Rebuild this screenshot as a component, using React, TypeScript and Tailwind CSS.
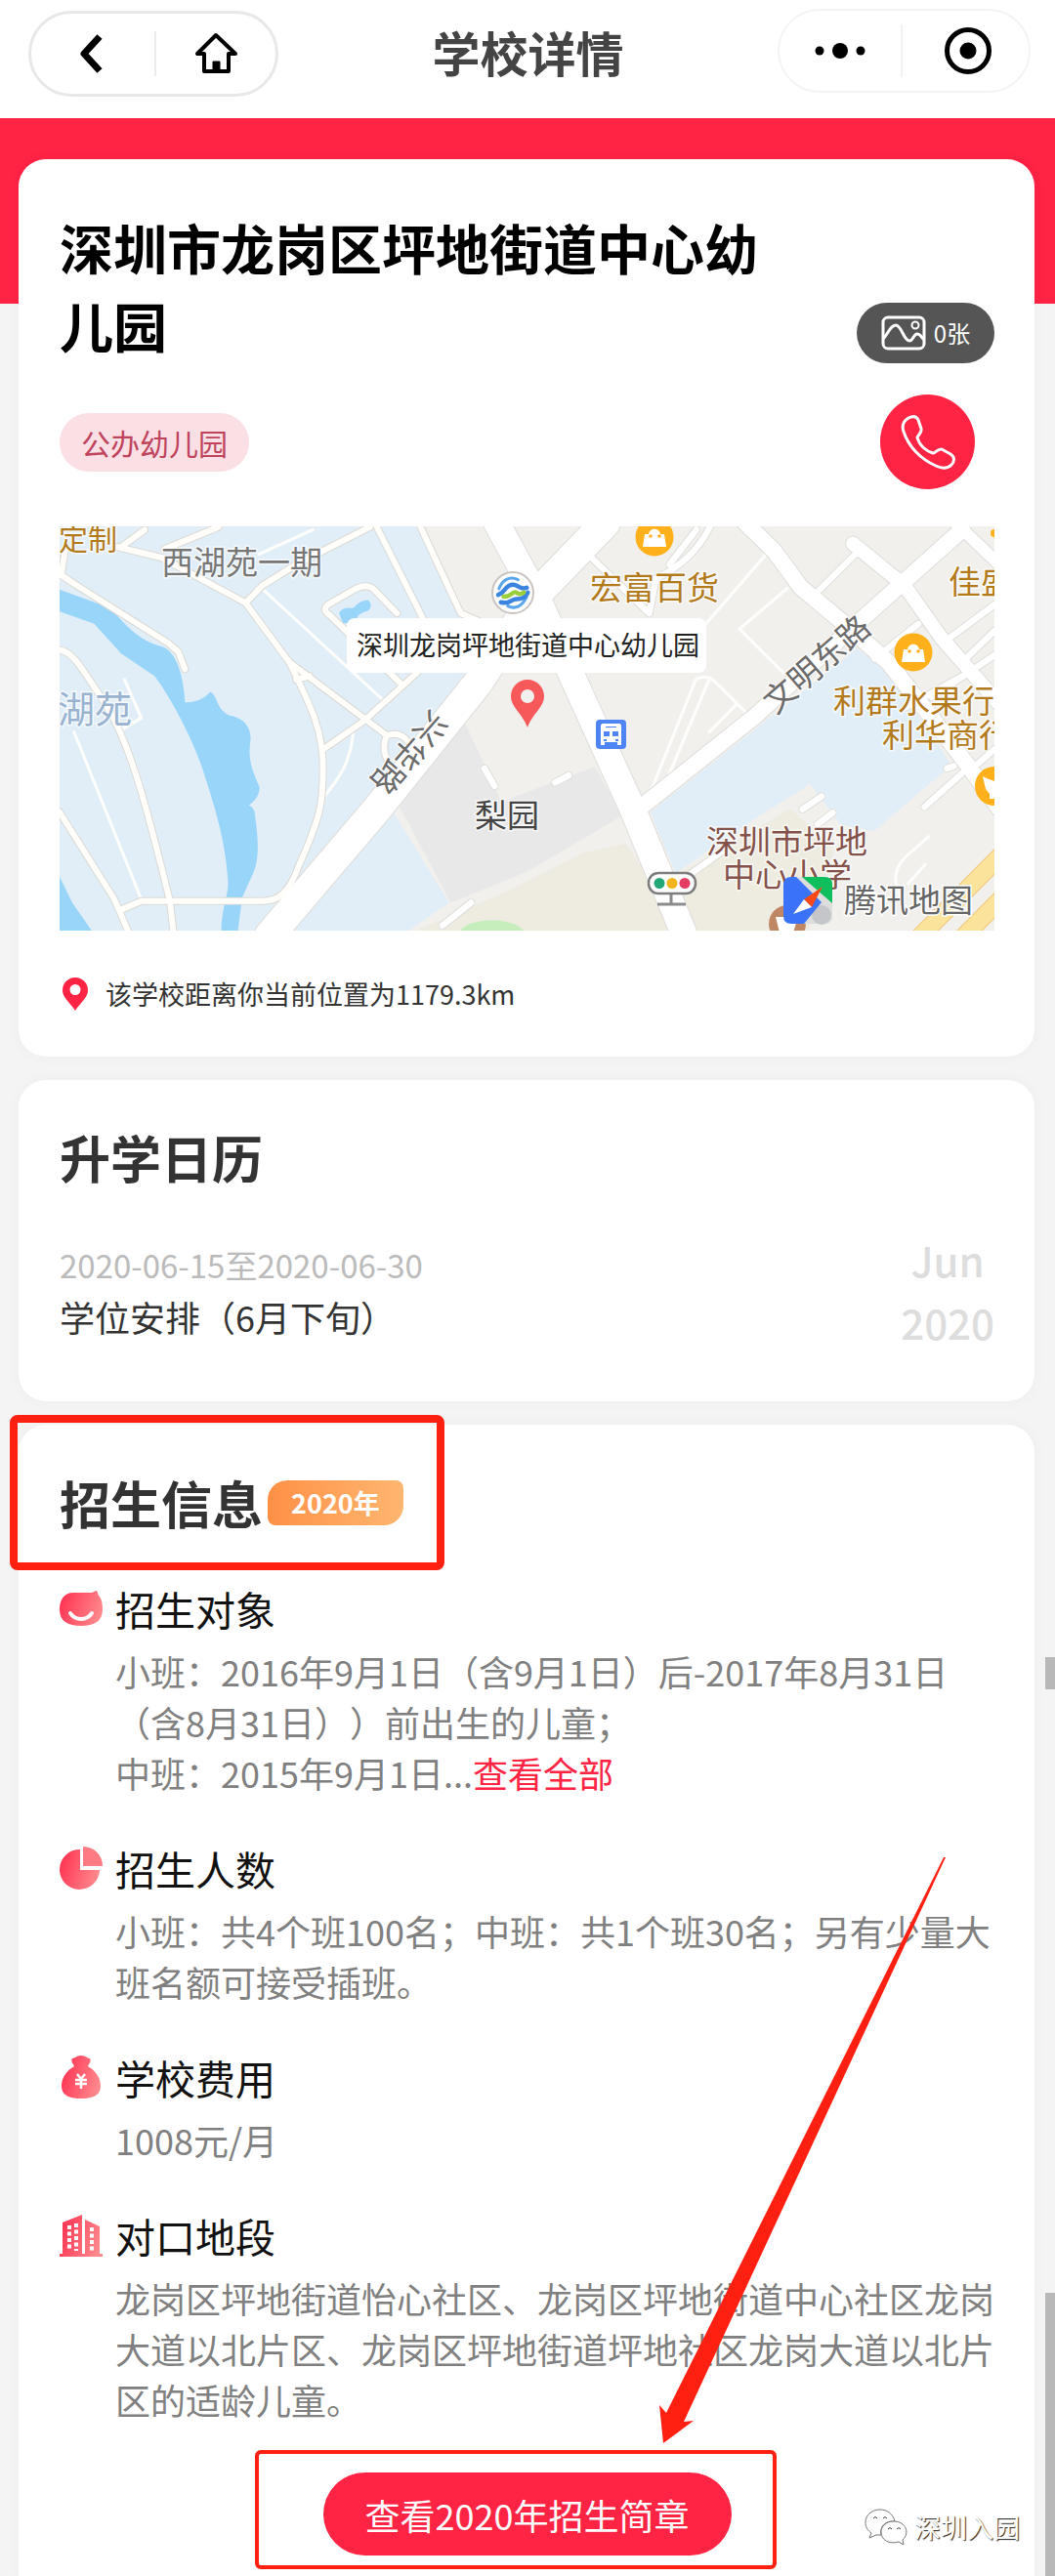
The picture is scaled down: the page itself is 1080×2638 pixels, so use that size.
import type { ReactNode } from "react";

const FONT = "font-['Noto_Sans_CJK_SC','Noto_Sans',sans-serif]";

export default function App() {
  return (
    <div className={`relative min-h-screen overflow-hidden bg-[#f4f4f4] text-[#333] [text-spacing-trim:space-all] ${FONT}`}>
      <NavBar />
      <div className="h-[190px] bg-[#ff2344]" />

      <main className="-mt-[148px] mr-[21px] ml-[19px] flex flex-col gap-6">
        <SchoolCard />
        <CalendarCard />
        <EnrollCard />
      </main>

      {/* Scroll thumbs */}
      <div aria-hidden className="absolute top-[1697px] right-0 h-[33px] w-[10px] bg-[#b8b8b8]" />
      <div aria-hidden className="absolute right-0 bottom-0 h-[290px] w-[10px] bg-[#b8b8b8]" />
    </div>
  );
}

function NavBar() {
  return (
    <header className="flex h-[121px] items-start justify-between bg-white pt-[9px] pr-[25px] pl-[29px]">
      <div className="mt-[2px] flex h-[88px] w-[256px] items-center rounded-full border-[3px] border-[#e8e8e8]">
        <button aria-label="返回" className="flex h-full flex-1 items-center justify-center pr-1">
          <svg width="24" height="40" viewBox="0 0 24 40" fill="none" stroke="#000" strokeWidth="7">
            <path d="M21 2.500L5 20l16 17.500" strokeLinejoin="round" />
          </svg>
        </button>
        <span className="h-[46px] w-[2px] bg-[#ececec]" />
        <button aria-label="首页" className="flex h-full flex-1 items-center justify-center">
          <svg width="44" height="44" viewBox="0 0 44 44" fill="none" stroke="#000" strokeWidth="4" strokeLinejoin="round">
            <path d="M22 3L3 22h7v18h25V22h7z" />
            <path d="M19 30h7v10h-7z" fill="#000" strokeWidth="1" />
          </svg>
        </button>
      </div>

      <h1 className="mt-[9px] text-[49px] leading-[70px] font-bold text-[#444]">学校详情</h1>

      <div className="flex h-[86px] w-[259px] items-center rounded-full border-2 border-[#f4f4f4]">
        <button aria-label="更多" className="flex h-full flex-1 items-center justify-center">
          <svg width="52" height="20" viewBox="0 0 52 20">
            <circle cx="5" cy="10" r="4.500" />
            <circle cx="26" cy="10" r="8" />
            <circle cx="47" cy="10" r="4.500" />
          </svg>
        </button>
        <span className="h-[54px] w-[2px] bg-[#f2f2f2]" />
        <button aria-label="关闭" className="flex h-full flex-1 items-center justify-center pl-1">
          <svg width="50" height="50" viewBox="0 0 50 50">
            <circle cx="25" cy="25" r="21.500" fill="none" stroke="#000" strokeWidth="5" />
            <circle cx="25" cy="25" r="8.500" />
          </svg>
        </button>
      </div>
    </header>
  );
}

function SchoolCard() {
  return (
    <section className="rounded-[28px] bg-white pt-[49px] pr-[41px] pb-[44px] pl-[42px] shadow-[0_0_16px_rgba(0,0,0,0.03)]">
      <div className="flex items-end gap-16">
        <h2 className="flex-1 text-[55px] leading-[80px] font-bold text-black">深圳市龙岗区坪地街道中心幼儿园</h2>
        <button className="flex h-[62px] w-[141px] items-center justify-center gap-2 rounded-full bg-[#555] text-[24px] text-white">
          <svg width="46" height="36" viewBox="0 0 46 36" fill="none" stroke="#fff" strokeWidth="3">
            <rect x="2" y="2" width="42" height="32" rx="5" />
            <path d="M3 23C8 17 10 10 15 10c6 0 8 16 14 16 4 0 4-7 8-7 3 0 4 3 6 5" strokeLinecap="round" />
            <circle cx="35" cy="10" r="3.500" strokeWidth="2" />
          </svg>
          0张
        </button>
      </div>

      <div className="mt-[32px] flex items-center justify-between pr-5">
        <span className="rounded-full bg-[#fae0e5] px-[22px] text-[30px] leading-[60px] text-[#c0435c]">公办幼儿园</span>
        <button aria-label="拨打电话" className="flex h-[97px] w-[97px] items-center justify-center rounded-full bg-[#ff2344]">
          <svg width="56" height="56" viewBox="0 0 56 56" fill="none" stroke="#fff" strokeWidth="3" strokeLinejoin="round">
            <path d="M8 3c4-2 8-2 10 2l3 9c1 4-3 6-4 9 2 8 9 14 16 16 3 0 5-5 9-4l9 5c5 3 4 8 1 11-4 4-10 4-16 1C20 45 8 32 3 17 1 11 3 6 8 3z" />
          </svg>
        </button>
      </div>

      <SchoolMap />

      <p className="mt-[45px] flex items-center text-[27px] leading-[40px]">
        <svg className="mr-[18px] ml-[3px]" width="26" height="34" viewBox="0 0 26 34">
          <path d="M13 0a13 13 0 0 0-13 13c0 8 8 13 13 21 5-8 13-13 13-21A13 13 0 0 0 13 0zm0 7a5.500 5.500 0 1 1 0 11 5.500 5.500 0 0 1 0-11z" fill="#ff2344" />
        </svg>
        该学校距离你当前位置为1179.3km
      </p>
    </section>
  );
}

const lanes = [
  "M195 110L182 190L220 215L500 385L530 410L550 460",
  "M350 110L480 140L730 270L860 440C920 560 960 630 960 740C960 830 960 870 890 1020C860 1100 830 1125 780 1125L420 1125L360 1150",
  "M730 270L780 220L880 160L1100 52",
  "M860 440L1150 650M880 490L920 480M1150 650C1130 690 1150 740 1190 760M1150 650C1180 640 1200 650 1215 670",
  "M360 110L430 60M490 115L650 52",
  "M177 405C220 410 250 470 300 540C380 650 430 830 505 1125L515 1210",
  "M177 870L340 1120L380 1210",
  "M1180 300L1110 230Q1090 215 1060 228L975 275Q955 290 980 305L1190 500M1240 470L1080 610L960 690",
  "M1120 52L1265 330M1250 52L1350 260L1370 300L1430 325",
];

const thinLanes = [
  "M220 640L420 1120M370 490L420 600L350 640",
  "M780 230L1140 550M770 130L930 60",
  "M1050 640C1040 740 1000 780 960 830",
  "M2278 130L2098 330M2340 228L2198 345L2328 470",
  "M2068 490L1918 850M2108 490L1950 850M2068 490Q2100 470 2130 500L2228 595M2190 560L2108 640",
  "M2760 940L2690 1000Q2640 1050 2680 1120M2750 1020L2700 1075",
];

const streets = [
  "M2548 125L2418 250M2956 275L2810 380M2956 350L2860 440M2956 420L2770 540M2730 330L2600 430M2880 470L2690 570",
  "M1758 140L1930 300L1950 200Q2060 150 2110 52M1990 160L2070 60",
  "M2858 760L2748 855M2956 690L2890 745M2020 1070L2150 980",
  "M2385 862L2442 825M2430 905L2475 872M2815 745L2835 738M1440 745L1470 795M1650 785L1690 765M1315 1195L1400 1130",
];

const avenues = [
  { d: "M1800 40L1590 250L1420 500L1130 850L800 1225", w: 86 },
  { d: "M1470 30L1600 260L1705 490L1880 860L2040 1235", w: 76 },
  { d: "M1900 860L2250 590L2500 370L2860 60", w: 46 },
  { d: "M2215 40L2300 120L2380 225L2510 330L2640 440L2770 600L2880 740L2970 860", w: 46 },
  { d: "M2535 100L2688 220L2798 370L2970 560", w: 40 },
  { d: "M2840 40L2970 160", w: 34 },
];

function SchoolMap() {
  return (
    <svg viewBox="0 0 957 414" className="mt-[38px] block h-auto w-full" role="img" aria-label="地图">
      {/* Terrain and roads share one local grid */}
      <g transform="translate(-61 -18) scale(.3444 .3571)" strokeLinejoin="round" strokeLinecap="round" fill="none">
        <path d="M100 0H3100V1300H100z" fill="#f1f0ed" />
        <path d="M100 0H1240L1370 300L1440 330V470L810 1230H100z" fill="#e1eef8" />
        <path d="M850 1220L1170 870L1335 1130L1200 1220z" fill="#e1eef8" />
        <path d="M1180 840L1380 610L1490 840L1768 740L1850 880L1568 1040L1340 1130z" fill="#e8e8e8" />
        <path d="M1210 1220L1500 1100L1740 985L1860 960L2050 1230z" fill="#eeebe1" />
        <path d="M2010 1050L2350 860L2480 980L2400 1220H2050z" fill="#eeebe1" />
        <ellipse cx="1462" cy="1218" rx="95" ry="38" fill="#c6eebc" />
        <path d="M1933 870L2548 400L2650 480L2828 735L2598 925L2498 905L2408 790L2258 880L2008 1045z" fill="#e1eef8" />
        <path
          d="M150 222L320 282C360 310 390 370 480 395C520 405 545 470 550 555Q600 555 625 525C650 540 640 570 680 592C730 600 745 630 745 660C735 720 750 750 772 800Q770 830 740 850Q758 860 758 880C770 960 770 1010 750 1050L720 1115L705 1225H658C655 1150 680 1110 678 1070C670 950 640 860 600 740C570 660 520 560 460 480L360 415L280 330L150 285z"
          fill="#99d5f8"
        />
        <path d="M150 1000L177 1055L215 1130L280 1220H150z" fill="#99d5f8" />
        <path d="M1008 300Q1015 280 1050 285Q1070 262 1095 262Q1110 280 1095 292Q1080 295 1065 305Q1060 330 1020 328z" fill="#99d5f8" />

        <path d="M2700 1260L3010 960M2820 1270L3010 1085" stroke="#f2c77b" strokeWidth="54" />
        <path d="M2700 1260L3010 960M2820 1270L3010 1085" stroke="#fce39b" strokeWidth="48" />

        {thinLanes.map((d) => (
          <path key={d} d={d} stroke="#fdfdfb" strokeWidth="9" />
        ))}
        {lanes.map((d) => (
          <path key={d} d={d} stroke="#dcdad5" strokeWidth="23" />
        ))}
        {streets.map((d) => (
          <path key={d} d={d} stroke="#e0dfdc" strokeWidth="24" />
        ))}
        {avenues.map((a) => (
          <path key={a.d} d={a.d} stroke="#dfdedb" strokeWidth={a.w + 6} />
        ))}
        {lanes.map((d) => (
          <path key={d} d={d} stroke="#fffefb" strokeWidth="17" />
        ))}
        {streets.map((d) => (
          <path key={d} d={d} stroke="#fff" strokeWidth="18" />
        ))}
        {avenues.map((a) => (
          <path key={a.d} d={a.d} stroke="#fff" strokeWidth={a.w} />
        ))}
      </g>

      {/* Places */}
      <g fontSize="33" strokeWidth="3" paintOrder="stroke" stroke="#ffffffb0">
        <g fill="#b37a1c">
          <text x="-1" y="24" fontSize="30">定制</text>
          <text x="543" y="75">宏富百货</text>
          <text x="910" y="69">佳盛</text>
          <text x="792" y="191">利群水果行</text>
          <text x="842" y="226">利华商行</text>
        </g>
        <text x="104" y="49" fill="#777">西湖苑一期</text>
        <text x="-2" y="201" fontSize="38" fill="#99b3d0">湖苑</text>
        <text x="425" y="308" fill="#444">梨园</text>
        <g fill="#84524a">
          <text x="662" y="335">深圳市坪地</text>
          <text x="679" y="369">中心小学</text>
        </g>
        <g fill="#6b6b6b" textAnchor="middle">
          <text transform="translate(358 232) rotate(131)" y="12">兴华路</text>
          <text transform="translate(775 141) rotate(-41)" y="12">文明东路</text>
        </g>
      </g>

      <BagPoi x={609} y={11} />
      <BagPoi x={874} y={129} />
      <circle cx="957" cy="266" r="20" fill="#ffb01a" />
      <path d="M945 256l4 2 8 3v18h-5v-5l-4-5z" fill="#fff" />
      <circle cx="957" cy="7" r="4" fill="#ffb01a" />

      {/* Carrier shop */}
      <circle cx="464" cy="68" r="21" fill="#fff" stroke="#c9c4c0" strokeWidth="2" />
      <g transform="rotate(-12 464 68)" fill="none" strokeWidth="4.500" strokeLinecap="round">
        <path d="M451 61c5-8 13-11 21-5M456 80c7 6 15 3 21-5" stroke="#5aa6ee" strokeWidth="3" />
        <path d="M449 67c8-1 9-9 17-7 6 2 6 7 13 6" stroke="#3b84e0" />
        <path d="M450 75c8 4 10 0 14 0s9 3 15-4" stroke="#3b84e0" />
        <path d="M454 70c9 2 10-5 14-1 3 3 5 2 7 1" stroke="#9ace3a" />
      </g>

      <rect x="549" y="198" width="31" height="30" rx="4" fill="#4f84f5" />
      <path d="M556 202h17q2 0 2 3v19h-4v-3h-13v3h-4v-19q0-3 2-3z" fill="#fff" />
      <path d="M557 210h6v5h-6zM566 210h6v5h-6zM557 218h3v2h-3zM569 218h3v2h-3zM559 205h11v1h-11z" fill="#4f84f5" />

      <path d="M626 377v10M612 387h29" stroke="#8b8b8b" strokeWidth="3" />
      <rect x="603" y="355" width="48" height="21" rx="10" fill="#fff" stroke="#7d7d7d" strokeWidth="2.500" />
      <circle cx="614" cy="365.500" r="5.500" fill="#23a777" />
      <circle cx="627" cy="365.500" r="5.500" fill="#f0b41c" />
      <circle cx="640" cy="365.500" r="5.500" fill="#e63d62" />

      {/* Callout */}
      <rect x="294" y="94" width="368" height="56" rx="8" fill="#fff" />
      <text x="304" y="132" fontSize="27" fill="#222">深圳龙岗坪地街道中心幼儿园</text>
      <path d="M479 157c-10 0-17 8-17 17 0 11 12 18 17 32 5-14 17-21 17-32 0-9-7-17-17-17zm0 10a7 7 0 1 1 0 14 7 7 0 0 1 0-14z" fill="#f7595b" />

      {/* Map provider */}
      <circle cx="745" cy="407" r="19" fill="#c08765" />
      <path d="M733 400h23l-5 16h-14z" fill="#fff" />
      <path d="M748 359h35q8 0 8 8v32q0 8-8 8h-35z" fill="#ddd" />
      <circle cx="780" cy="398" r="10" fill="#c4c6c9" />
      <path d="M760 359h23q8 0 8 8v19z" fill="#0fbf5e" />
      <path d="M749 359h5l26 26-18 22h-13q-8 0-8-8v-32q0-8 8-8z" fill="#3a72f8" />
      <path d="M781 369l-19 13 8 8z" fill="#fb4a17" />
      <path d="M751 397l11-15 8 8z" fill="#fff" />
      <text x="803" y="395" fontSize="33" fill="#666" stroke="#fff" strokeWidth="3" paintOrder="stroke">腾讯地图</text>
    </svg>
  );
}

function BagPoi({ x, y }: { x: number; y: number }) {
  return (
    <g transform={`translate(${x} ${y})`}>
      <circle r="19.500" fill="#ffb01a" />
      <path d="M-10-3h4c1-7 11-7 12 0h4l2 13h-24z" fill="#fff" />
      <circle cx="-4" cy="-1" r="1.800" fill="#ffb01a" />
      <circle cx="5" cy="-1" r="1.800" fill="#ffb01a" />
    </g>
  );
}

function CalendarCard() {
  return (
    <section className="rounded-[28px] bg-white pt-[49px] pr-[41px] pb-[49px] pl-[42px] shadow-[0_0_16px_rgba(0,0,0,0.03)]">
      <h2 className="text-[52px] leading-[60px] font-bold">升学日历</h2>
      <div className="mt-[43px] flex items-center justify-between">
        <div className="leading-[53px]">
          <p className="text-[33px] text-[#bbb]">2020-06-15至2020-06-30</p>
          <p className="text-[36px]">学位安排（6月下旬）</p>
        </div>
        <div className="text-center text-[42px] leading-[64px] font-medium text-[#ddd]">
          <p>Jun</p>
          <p>2020</p>
        </div>
      </div>
    </section>
  );
}

function EnrollCard() {
  return (
    <section className="relative rounded-t-[28px] bg-white pt-[50px] pr-[41px] pb-[21px] pl-[42px] shadow-[0_0_16px_rgba(0,0,0,0.03)]">
      <div className="relative flex w-fit items-center gap-[5px]">
        <h2 className="text-[52px] leading-[60px] font-bold">招生信息</h2>
        <span className="rounded-tl-[20px] rounded-tr-[8px] rounded-br-[20px] rounded-bl-[8px] bg-linear-to-r from-[#ff9045] to-[#ffb670] px-[24px] text-[27px] leading-[46px] font-bold text-white">
          2020年
        </span>
        <div aria-hidden className="absolute -top-[60px] -right-[42px] -bottom-[39px] -left-[51px] rounded-[8px] border-8 border-[#ff2012]" />
      </div>

      <div className="mt-[52px] flex flex-col gap-[46px]">
        <InfoItem icon={<FaceIcon />} title="招生对象">
          小班：2016年9月1日（含9月1日）后-2017年8月31日（含8月31日））前出生的儿童；
          <br />
          中班：2015年9月1日...
          <a href="#all" className="text-[#ff2344]">查看全部</a>
        </InfoItem>
        <InfoItem icon={<PieIcon />} title="招生人数">
          小班：共4个班100名；中班：共1个班30名；另有少量大班名额可接受插班。
        </InfoItem>
        <InfoItem icon={<MoneyIcon />} title="学校费用">
          1008元/月
        </InfoItem>
        <InfoItem icon={<BuildingIcon />} title="对口地段">
          龙岗区坪地街道怡心社区、龙岗区坪地街道中心社区龙岗大道以北片区、龙岗区坪地街道坪地社区龙岗大道以北片区的适龄儿童。
        </InfoItem>
      </div>

      <div className="mt-[49px] flex justify-center">
        <div className="relative">
          <button className="h-[85px] w-[418px] rounded-full bg-[#ff2344] text-[36px] text-white">查看2020年招生简章</button>
          <div aria-hidden className="absolute -top-[23px] -right-[46px] -bottom-[14px] -left-[70px] rounded-[6px] border-4 border-[#ff2012]" />
        </div>
      </div>

      <svg aria-hidden className="absolute right-[91px] bottom-[136px]" width="293" height="600" viewBox="0 0 293 600">
        <path d="M293 0L25 578l10-1L4 600 0 561l7 8L291 0z" fill="#ff2012" />
      </svg>

      <div className="absolute right-[15px] bottom-[30px] flex items-center gap-[7px] text-[27px] leading-[40px] text-white [text-shadow:1px_1px_1px_#222]">
        <svg width="44" height="38" viewBox="0 0 44 38" fill="#fff" stroke="#777" strokeWidth="1">
          <path d="M16 1C7 1 1 7 1 14c0 5 2 8 6 11l-2 5 7-3h5c-2-8 4-15 14-14C29 5 23 1 16 1z" />
          <path d="M30 13c-8 0-13 5-13 11 0 8 8 13 18 10l5 3-1-5c8-7 3-19-9-19z" />
          <path d="M9 10q2-3 4 0M19 10q2-3 4 0M24 21q2-3 4 0M33 21q2-3 4 0" fill="none" stroke="#444" />
        </svg>
        深圳入园
      </div>
    </section>
  );
}

function InfoItem({ icon, title, children }: { icon: ReactNode; title: string; children: ReactNode }) {
  return (
    <div className="flex gap-[13px]">
      <div className="flex h-[52px] w-[44px] shrink-0 items-center justify-center">{icon}</div>
      <div className="flex-1">
        <h3 className="text-[41px] leading-[52px] text-[#111]">{title}</h3>
        <p className="mt-3 text-[36px] leading-[52px] text-[#808080]">{children}</p>
      </div>
    </div>
  );
}

function Warm({ id }: { id: string }) {
  return (
    <linearGradient id={id} x1="0" y1="0.300" x2="1" y2="0.600">
      <stop offset="0" stopColor="#ff3352" />
      <stop offset="1" stopColor="#ff8a8e" />
    </linearGradient>
  );
}

function FaceIcon() {
  return (
    <svg width="44" height="44" viewBox="0 0 44 44">
      <Warm id="face" />
      <path d="M14 6h18c3 0 4-2 6-2 1 2 1 3 2 5 3 3 4 8 4 14 0 12-8 17-22 17S0 35 0 23C0 13 5 6 14 6z" fill="url(#face)" />
      <path d="M11 27c5 8 17 8 22 0" fill="none" stroke="#fff" strokeWidth="4" strokeLinecap="round" />
    </svg>
  );
}

function PieIcon() {
  return (
    <svg width="44" height="44" viewBox="0 0 44 44">
      <Warm id="pie" />
      <path d="M21 3v21h20A20.500 20.500 0 1 1 21 3z" fill="url(#pie)" />
      <path d="M24 0a20 20 0 0 1 20 20H24z" fill="#ff7a82" />
    </svg>
  );
}

function MoneyIcon() {
  return (
    <svg width="44" height="44" viewBox="0 0 44 44">
      <Warm id="money" />
      <path d="M13 3c3 0 4-3 9-3s6 3 9 3c2 3-1 5-2 8 7 4 13 11 13 20 0 11-10 13-20 13S2 42 2 31c0-9 6-16 13-20-1-3-4-5-2-8z" fill="url(#money)" />
      <path d="M18 19l4 5 4-5M16 25h12M16 29h12M22 24v10" fill="none" stroke="#fff" strokeWidth="2.500" />
    </svg>
  );
}

function BuildingIcon() {
  return (
    <svg width="44" height="44" viewBox="0 0 44 44">
      <Warm id="building" />
      <path d="M0 41h3V9L23 1v40h3V6l15 7v28h3v3H0z" fill="url(#building)" />
      <path d="M10 12v26M17 10v28M33 14v24" fill="none" stroke="#fff" strokeWidth="4" strokeDasharray="4 2.500" />
    </svg>
  );
}
